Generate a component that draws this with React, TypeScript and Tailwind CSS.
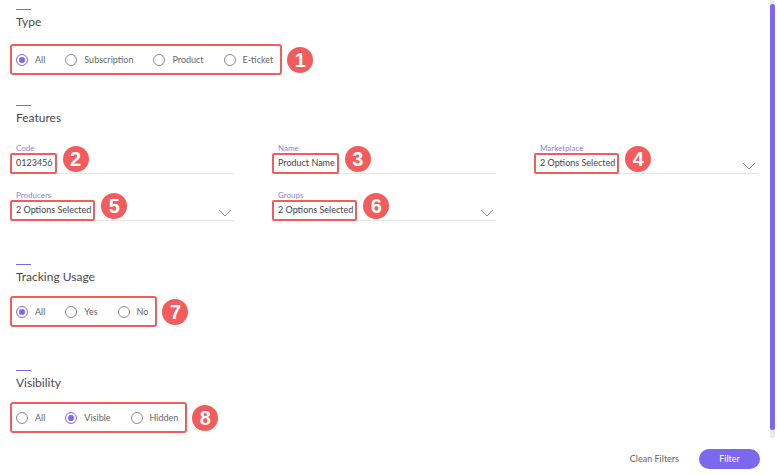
import { ReactNode } from "react";

const font = { fontFamily: "Lato, 'Open Sans', sans-serif" };

function Badge({ n }: { n: number }) {
  return (
    <span className="flex h-[26px] w-[26px] shrink-0 items-center justify-center rounded-full bg-[#f25c5c] text-[20px] font-black leading-none text-white [font-family:'Liberation_Sans',sans-serif]">
      {n}
    </span>
  );
}

function SectionTitle({ children }: { children: ReactNode }) {
  return (
    <div>
      <div className="h-px w-[15px] bg-[#7b68ee]" />
      <h2 className="mt-[4px] text-[12px] leading-[16px] text-[#4a4a4a]">{children}</h2>
    </div>
  );
}

function Radio({ label, checked }: { label: string; checked?: boolean }) {
  return (
    <label className="flex items-center gap-[7px]">
      <span
        className={
          checked
            ? "flex h-[12px] w-[12px] items-center justify-center rounded-full border border-[#7b68ee]"
            : "h-[12px] w-[12px] rounded-full border border-[#8a8a8a]"
        }
      >
        {checked && <span className="h-[6px] w-[6px] rounded-full bg-[#7b68ee]" />}
      </span>
      <span className="text-[9px] leading-none text-[#666]">{label}</span>
    </label>
  );
}

function RadioGroup({ options, selected, badge }: { options: string[]; selected: number; badge: number }) {
  return (
    <div className="-ml-[6px] flex items-center gap-[5px]">
      <div className="flex h-[31px] items-center gap-[20px] rounded-[3px] border-[2px] border-[#f25c5c] pl-[4px] pr-[7px]">
        {options.map((o, i) => (
          <Radio key={o} label={o} checked={i === selected} />
        ))}
      </div>
      <Badge n={badge} />
    </div>
  );
}

function Chevron() {
  return (
    <svg width="14" height="8" viewBox="0 0 14 8" className="mr-[2px] mt-[6px]">
      <polyline points="1,1 7,7 13,1" fill="none" stroke="#8a8a8a" strokeWidth="1" />
    </svg>
  );
}

function Field({ label, value, badge, select }: { label: string; value: string; badge: number; select?: boolean }) {
  return (
    <div>
      <div className="text-[8px] leading-[10px] text-[#8f80f0]">{label}</div>
      <div className="flex h-[21px] items-center justify-between border-b border-[#e6e6e6]">
        <div className="-ml-[6px] flex items-center gap-[6px]">
          <span className="flex h-[21px] items-center rounded-[2px] border-[2px] border-[#f25c5c] px-[2px] pl-[4px] text-[9px] text-[#444]">
            {value}
          </span>
          <span className="-translate-y-[4px]">
            <Badge n={badge} />
          </span>
        </div>
        {select && <Chevron />}
      </div>
    </div>
  );
}

export default function App() {
  return (
    <div className="flex h-[475px] w-[777px] bg-white" style={font}>
      <div className="flex flex-1 flex-col pl-4 pr-[12px] pt-[9px]">
        <SectionTitle>Type</SectionTitle>
        <div className="mt-[14px]">
          <RadioGroup options={["All", "Subscription", "Product", "E-ticket"]} selected={0} badge={1} />
        </div>

        <div className="mt-[30px]">
          <SectionTitle>Features</SectionTitle>
        </div>
        <div className="mt-[17px] grid grid-cols-3 gap-x-[44px] gap-y-[16px]">
          <Field label="Code" value="0123456" badge={2} />
          <Field label="Name" value="Product Name" badge={3} />
          <Field label="Marketplace" value="2 Options Selected" badge={4} select />
          <Field label="Producers" value="2 Options Selected" badge={5} select />
          <Field label="Groups" value="2 Options Selected" badge={6} select />
        </div>

        <div className="mt-[43px]">
          <SectionTitle>Tracking Usage</SectionTitle>
        </div>
        <div className="mt-[11px]">
          <RadioGroup options={["All", "Yes", "No"]} selected={0} badge={7} />
        </div>

        <div className="mt-[43px]">
          <SectionTitle>Visibility</SectionTitle>
        </div>
        <div className="mt-[11px]">
          <RadioGroup options={["All", "Visible", "Hidden"]} selected={1} badge={8} />
        </div>

        <div className="mt-[16px] flex items-center justify-end gap-[20px] -mr-[2px]">
          <button className="text-[9px] text-[#666]">Clean Filters</button>
          <button className="h-[20px] w-[61px] rounded-full bg-[#7b68ee] text-[9px] text-white">Filter</button>
        </div>
      </div>
      <div className="mr-[2px] h-[438px] w-[5px] rounded-full bg-[#e8e8e8] pt-[4px] pb-[8px]">
        <div className="h-full w-full rounded-full bg-[#7b68ee]" />
      </div>
    </div>
  );
}
